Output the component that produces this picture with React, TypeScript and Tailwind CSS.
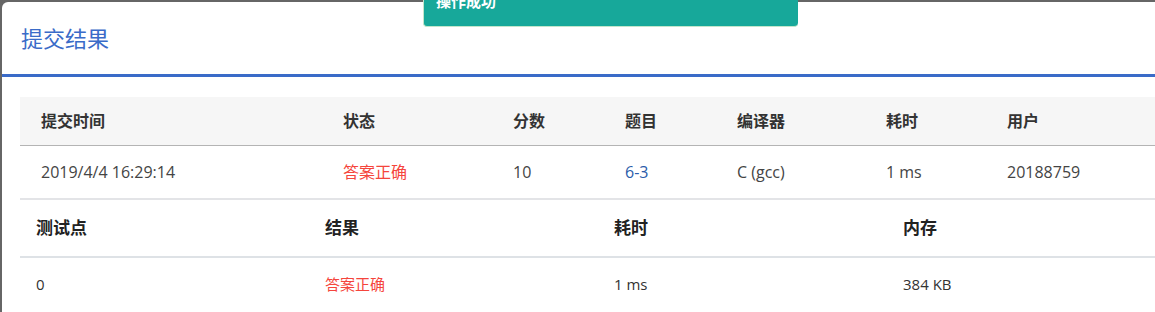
import React from 'react';

const font = { fontFamily: '"Open Sans", "Noto Sans CJK SC", sans-serif' };

const summaryCols = [
  { title: '提交时间', w: 'w-[302px]' },
  { title: '状态', w: 'w-[170px]' },
  { title: '分数', w: 'w-[112px]' },
  { title: '题目', w: 'w-[112px]' },
  { title: '编译器', w: 'w-[149px]' },
  { title: '耗时', w: 'w-[121px]' },
  { title: '用户', w: 'flex-1' },
];

const caseCols = ['测试点', '结果', '耗时', '内存'];

export default function App() {
  return (
    <div
      className="relative w-[1155px] h-[312px] overflow-hidden bg-[#666] pt-[2px] pl-[2px]"
      style={font}
    >
      <div className="h-full bg-white rounded-tl-md">
        {/* modal header */}
        <div className="h-[72px] flex items-center pl-[19px] pt-[1px] text-[22px] text-[#3a6bc8]">
          提交结果
        </div>
        <div className="h-[3px] bg-[#3a6bc8]" />

        <div className="pl-[18px] pt-[20px]">
          {/* submission summary */}
          <div className="flex h-[49px] bg-[#f6f6f6] border-b border-[#b4b4b4] text-[16px] font-semibold text-[#333]">
            {summaryCols.map((c) => (
              <div key={c.title} className={`${c.w} shrink-0 pl-[21px] flex items-center`}>
                {c.title}
              </div>
            ))}
          </div>
          <div className="flex h-[54px] border-b-2 border-[#e3e4e7] text-[16px] text-[#444]">
            <div className="w-[302px] shrink-0 pl-[21px] flex items-center">2019/4/4 16:29:14</div>
            <div className="w-[170px] shrink-0 pl-[21px] flex items-center text-[#f5453c]">答案正确</div>
            <div className="w-[112px] shrink-0 pl-[21px] flex items-center">10</div>
            <div className="w-[112px] shrink-0 pl-[21px] flex items-center text-[#2a5caa]">6-3</div>
            <div className="w-[149px] shrink-0 pl-[21px] flex items-center">C (gcc)</div>
            <div className="w-[121px] shrink-0 pl-[21px] flex items-center">1 ms</div>
            <div className="flex-1 pl-[21px] flex items-center">20188759</div>
          </div>

          {/* test cases */}
          <div className="flex h-[58px] border-b-2 border-[#dee2e6] text-[17px] font-bold text-[#222]">
            {caseCols.map((c) => (
              <div key={c} className="w-[289px] shrink-0 pl-[16px] flex items-center">
                {c}
              </div>
            ))}
          </div>
          <div className="flex h-[52px] text-[15px] text-[#333]">
            <div className="w-[289px] shrink-0 pl-[16px] flex items-center">0</div>
            <div className="w-[289px] shrink-0 pl-[16px] flex items-center text-[#f5453c]">答案正确</div>
            <div className="w-[289px] shrink-0 pl-[16px] flex items-center">1 ms</div>
            <div className="w-[289px] shrink-0 pl-[16px] flex items-center">384 KB</div>
          </div>
        </div>
      </div>

      {/* toast */}
      <div className="absolute left-[423px] top-0 w-[375px] h-[27px] bg-[#17a89a] border-l border-b border-[#c3e6cb] rounded-b-sm overflow-hidden">
        <div className="absolute left-[12px] top-[-9px] text-[15px] font-bold text-white leading-[20px]">
          操作成功
        </div>
      </div>
    </div>
  );
}
